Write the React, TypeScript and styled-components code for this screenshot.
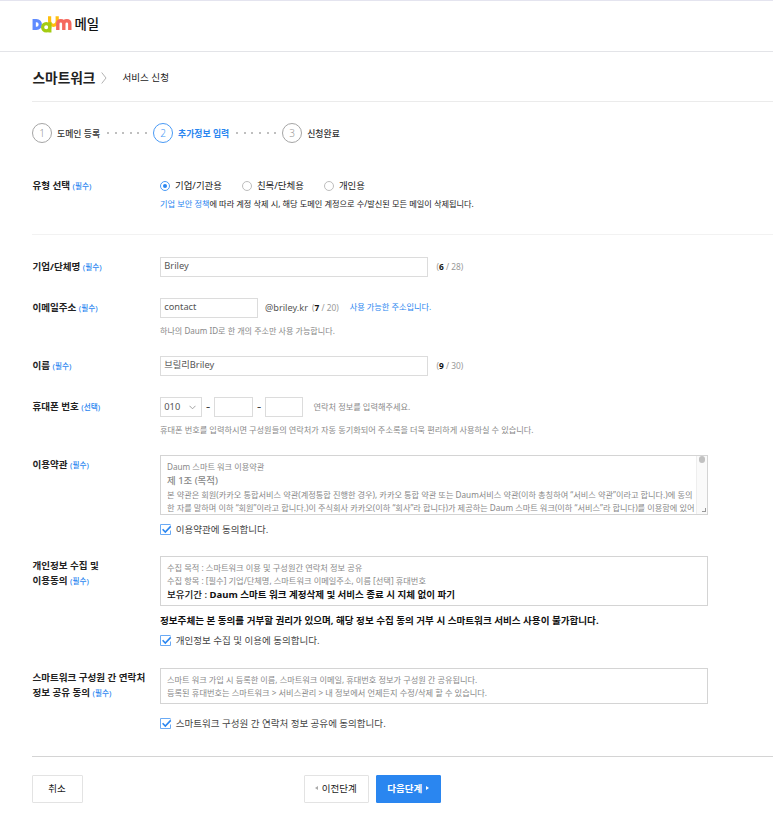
import React from 'react';
import styled, { createGlobalStyle } from 'styled-components';

const blue = '#2a86f0';

const GlobalStyle = createGlobalStyle`
  * { box-sizing: border-box; }
  body {
    margin: 0;
    background: #fff;
    color: #222;
    font-family: "Noto Sans", "Noto Sans CJK KR", sans-serif;
    font-size: 9.5px;
  }
`;

const Page = styled.div`
  height: 819px;
  overflow: hidden;
  white-space: nowrap;
  border-top: 1px solid #e4e4ef;
`;

const Header = styled.header`
  display: flex;
  align-items: center;
  height: 51px;
  padding: 0 0 4px 32px;
  border-bottom: 1px solid #e3e4e8;
`;

const ServiceName = styled.span`
  margin-left: 2.5px;
  font-size: 13.4px;
  line-height: 20px;
  font-weight: 500;
  color: #111;
`;

const Main = styled.main`
  padding-left: 32px;
`;

const TitleBar = styled.div`
  display: flex;
  align-items: center;
  height: 50px;
  padding: 2px 0 0 0.5px;
  border-bottom: 1px solid #ebebeb;
`;

const Title = styled.h1`
  margin: 0;
  font-size: 13.7px;
  line-height: 20px;
  font-weight: 700;
`;

const TitleArrow = styled.svg`
  margin: 0 15px 0 6px;
`;

const SubTitle = styled.span`
  padding-bottom: 1px;
  font-size: 9.57px;
`;

const Steps = styled.ol`
  display: flex;
  align-items: center;
  height: 62px;
  margin: 0;
  padding: 0;
  list-style: none;
`;

const Step = styled.li<{ $active?: boolean }>`
  display: flex;
  align-items: center;
  font-size: 8.87px;
  font-weight: ${(p) => (p.$active ? 700 : 500)};
  color: ${(p) => (p.$active ? blue : '#333')};
`;

const StepNumber = styled.span<{ $active?: boolean }>`
  display: flex;
  align-items: center;
  justify-content: center;
  width: 20px;
  height: 20px;
  margin-right: 5px;
  border: 1px solid ${(p) => (p.$active ? '#4a9af5' : '#a5a5a5')};
  border-radius: 50%;
  font-size: 10px;
  font-weight: 300;
  color: ${(p) => (p.$active ? '#4a9af5' : '#999')};
`;

const StepDots = styled.li`
  display: flex;
  gap: 5.6px;
  margin: 0 6px 0 7px;
`;

const Dot = styled.i`
  width: 2px;
  height: 1.5px;
  border-radius: 1px;
  background: #aaa;
`;

const Row = styled.section<{ $height: number }>`
  display: grid;
  grid-template-columns: 128px 1fr;
  align-items: start;
  height: ${(p) => p.$height}px;
`;

const TypeRow = styled(Row)`
  padding-top: 12px;
  border-bottom: 1px solid #f2f2f2;
  margin-bottom: 22px;
`;

const Label = styled.div`
  padding: 2px 0 0 0.5px;
  font-size: 9.54px;
  line-height: 15px;
  font-weight: 700;
`;

const Mark = styled.span`
  font-size: 7.65px;
  font-weight: 500;
  color: ${blue};
`;

const Line = styled.div`
  display: flex;
  align-items: center;
  height: 20px;
`;

const RadioLabel = styled.label<{ $gap: number }>`
  display: flex;
  align-items: center;
  margin-right: ${(p) => p.$gap}px;
  font-size: 9.45px;
`;

const RadioText = styled.span`
  padding-bottom: 2px;
`;

const Radio = styled.span<{ $checked?: boolean }>`
  display: flex;
  align-items: center;
  justify-content: center;
  width: 10px;
  height: 10px;
  margin-right: 5px;
  border: 1px solid ${(p) => (p.$checked ? '#4a9af5' : '#bdbdbd')};
  border-radius: 50%;
  &::after {
    content: "";
    width: 4px;
    height: 4px;
    border-radius: 50%;
    background: ${(p) => (p.$checked ? blue : 'transparent')};
  }
`;

const Policy = styled.p`
  margin: 2px 0 0;
  font-size: 8.2px;
  line-height: 12px;
`;

const PolicyLink = styled.a`
  color: ${blue};
`;

const Field = styled.div<{ $width: number }>`
  width: ${(p) => p.$width}px;
  height: 20px;
  padding: 0 3.3px;
  border: 1px solid #dcdcdc;
  font-size: 9.25px;
  line-height: 16px;
  color: #555;
`;

const Select = styled(Field)`
  display: flex;
  align-items: center;
  justify-content: space-between;
  padding-right: 5px;
`;

const Dash = styled.span`
  width: 12px;
  padding-bottom: 2px;
  text-align: center;
  font-size: 13px;
  line-height: 16px;
  color: #444;
`;

const Domain = styled.span`
  margin-left: 7px;
  padding-bottom: 1px;
  font-size: 9.2px;
  color: #555;
`;

const Count = styled.span<{ $gap: number }>`
  margin-left: ${(p) => p.$gap}px;
  padding-bottom: 1px;
  font-size: 8.35px;
  color: #999;
`;

const CountNow = styled.b`
  color: #111;
`;

const Available = styled.span`
  margin-left: 11px;
  padding-bottom: 2px;
  font-size: 8.16px;
  line-height: 12px;
  color: ${blue};
`;

const Aside = styled.span`
  margin-left: 10.5px;
  padding-bottom: 2px;
  font-size: 8.18px;
  color: #888;
`;

const Hint = styled.p<{ $size: number }>`
  margin: 7px 0 0;
  font-size: ${(p) => p.$size}px;
  line-height: 12px;
  color: #888;
`;

const TermsBox = styled.div<{ $height: number }>`
  display: flex;
  justify-content: space-between;
  width: 548px;
  height: ${(p) => p.$height}px;
  padding-left: 6px;
  border: 1px solid #d4d4d4;
  font-size: 8.19px;
  line-height: 13px;
  color: #888;
  overflow: hidden;
`;

const TermsText = styled.div`
  padding-top: 4px;
`;

const Article = styled.div`
  font-size: 9.45px;
  line-height: 15px;
  font-weight: 500;
`;

const Retention = styled.div`
  font-size: 9.52px;
  line-height: 15px;
  font-weight: 500;
  color: #111;
`;

const Purpose = styled.div`
  font-size: 8.22px;
`;

const Scrollbar = styled.div`
  display: flex;
  flex-direction: column;
  align-items: center;
  justify-content: space-between;
  width: 11px;
  padding: 0 0 2px;
  background: #fafafa;
  border-left: 1px solid #eee;
`;

const Thumb = styled.div`
  width: 6px;
  height: 7px;
  border-radius: 3px;
  background: #c1c1c1;
`;

const Grip = styled.div`
  width: 4px;
  height: 4px;
  margin-left: 3px;
  border: solid #999;
  border-width: 0 1px 1px 0;
`;

const Notice = styled.p`
  margin: 8px 0 1px;
  font-size: 9.57px;
  line-height: 14px;
  font-weight: 700;
  color: #111;
`;

const Agree = styled.label<{ $top: number }>`
  display: flex;
  align-items: center;
  gap: 3.7px;
  height: 14px;
  margin-top: ${(p) => p.$top}px;
  font-size: 9.52px;
  color: #444;
`;

const AgreeText = styled.span`
  padding-bottom: 2px;
`;

const Footer = styled.footer`
  display: flex;
  height: 64px;
  padding-top: 18px;
  border-top: 1px solid #d4d4d4;
`;

const Button = styled.button<{ $width: number; $primary?: boolean }>`
  display: flex;
  align-items: center;
  justify-content: center;
  gap: 3.5px;
  width: ${(p) => p.$width}px;
  height: 28px;
  padding: 0 1px 3px 0;
  border: 1px solid ${(p) => (p.$primary ? blue : '#e3e3e3')};
  border-radius: 1px;
  background: ${(p) => (p.$primary ? blue : '#fff')};
  color: ${(p) => (p.$primary ? '#fff' : '#222')};
  font-family: inherit;
  font-size: 9.5px;
  font-weight: ${(p) => (p.$primary ? 700 : 400)};
`;

const StepButtons = styled.div`
  display: flex;
  gap: 7px;
  margin-left: 221px;
`;

const Triangle = styled.svg`
  margin-top: 1px;
`;

function DaumLogo() {
  return (
    <svg width="40" height="20" viewBox="32 14 40 20" fill="none">
      <path d="M34.2 20.7h2.2c5.2 0 5.2 7.7 0 7.7h-2.2z" stroke="#5f8bff" strokeWidth="3.3" />
      <path d="M49.6 16.3v5c0 5.4 7.6 5.4 7.6 0v-5" stroke="#ffbf0f" strokeWidth="3.2" />
      <circle cx="46.2" cy="27.3" r="3.6" stroke="#a4cc12" strokeWidth="3.2" />
      <path d="M49.9 22.2v10.3" stroke="#a4cc12" strokeWidth="3.1" />
      <path d="M57.8 30v-6.2c0-4.1 6-4.1 6 0V30M63.8 30v-6.2c0-4.1 6-4.1 6 0V30" stroke="#f5695f" strokeWidth="3.4" />
    </svg>
  );
}

function Check() {
  return (
    <svg width="12" height="12" viewBox="0 0 12 12" fill="none">
      <path d="M10.5 6.5v4H.5v-10h10" stroke="#6aaaf5" />
      <path d="M10.5 1v2" stroke="#6aaaf5" strokeOpacity=".5" />
      <path d="M2.6 5.3l2.7 2.7 5.4-5.6" stroke={blue} strokeWidth="1.6" />
    </svg>
  );
}

const Dots = () => (
  <StepDots>
    {[0, 1, 2, 3, 4, 5].map((n) => <Dot key={n} />)}
  </StepDots>
);

const Required = () => <Mark>(필수)</Mark>;

export default function App() {
  return (
    <Page>
      <GlobalStyle />
      <Header>
        <DaumLogo />
        <ServiceName>메일</ServiceName>
      </Header>
      <Main>
        <TitleBar>
          <Title>스마트워크</Title>
          <TitleArrow width="6" height="12" viewBox="0 0 6 12" fill="none">
            <path d="M.7.5L5 6 .7 11.5" stroke="#aaa" strokeWidth=".9" />
          </TitleArrow>
          <SubTitle>서비스 신청</SubTitle>
        </TitleBar>
        <Steps>
          <Step><StepNumber>1</StepNumber>도메인 등록</Step>
          <Dots />
          <Step $active><StepNumber $active>2</StepNumber>추가정보 입력</Step>
          <Dots />
          <Step><StepNumber>3</StepNumber>신청완료</Step>
        </Steps>

        <TypeRow $height={71}>
          <Label>유형 선택 <Required /></Label>
          <div>
            <Line>
              <RadioLabel $gap={20}><Radio $checked /><RadioText>기업/기관용</RadioText></RadioLabel>
              <RadioLabel $gap={20}><Radio /><RadioText>친목/단체용</RadioText></RadioLabel>
              <RadioLabel $gap={0}><Radio /><RadioText>개인용</RadioText></RadioLabel>
            </Line>
            <Policy><PolicyLink>기업 보안 정책</PolicyLink>에 따라 계정 삭제 시, 해당 도메인 계정으로 수/발신된 모든 메일이 삭제됩니다.</Policy>
          </div>
        </TypeRow>

        <Row $height={41}>
          <Label>기업/단체명 <Required /></Label>
          <Line>
            <Field $width={268}>Briley</Field>
            <Count $gap={8.5}>(<CountNow>6</CountNow> / 28)</Count>
          </Line>
        </Row>
        <Row $height={58}>
          <Label>이메일주소 <Required /></Label>
          <div>
            <Line>
              <Field $width={98}>contact</Field>
              <Domain>@briley.kr</Domain>
              <Count $gap={4}>(<CountNow>7</CountNow> / 20)</Count>
              <Available>사용 가능한 주소입니다.</Available>
            </Line>
            <Hint $size={8.08}>하나의 Daum ID로 한 개의 주소만 사용 가능합니다.</Hint>
          </div>
        </Row>
        <Row $height={41}>
          <Label>이름 <Required /></Label>
          <Line>
            <Field $width={268}>브릴리Briley</Field>
            <Count $gap={8.5}>(<CountNow>9</CountNow> / 30)</Count>
          </Line>
        </Row>
        <Row $height={58}>
          <Label>휴대폰 번호 <Mark>(선택)</Mark></Label>
          <div>
            <Line>
              <Select $width={42}>
                010
                <svg width="7" height="5" viewBox="0 0 7 5" fill="none">
                  <path d="M.5.8l3 3 3-3" stroke="#999" strokeWidth=".9" />
                </svg>
              </Select>
              <Dash>-</Dash>
              <Field $width={39} />
              <Dash>-</Dash>
              <Field $width={38} />
              <Aside>연락처 정보를 입력해주세요.</Aside>
            </Line>
            <Hint $size={8.18}>휴대폰 번호를 입력하시면 구성원들의 연락처가 자동 동기화되어 주소록을 더욱 편리하게 사용하실 수 있습니다.</Hint>
          </div>
        </Row>
        <Row $height={101}>
          <Label>이용약관 <Required /></Label>
          <div>
            <TermsBox $height={60}>
              <TermsText>
                <div>Daum 스마트 워크 이용약관</div>
                <Article>제 1조 (목적)</Article>
                <div>본 약관은 회원(카카오 통합서비스 약관(계정통합 진행한 경우), 카카오 통합 약관 또는 Daum서비스 약관(이하 총칭하여 “서비스 약관”이라고 합니다.)에 동의</div>
                <div>한 자를 말하며 이하 “회원”이라고 합니다.)이 주식회사 카카오(이하 “회사”라 합니다)가 제공하는 Daum 스마트 워크(이하 “서비스”라 합니다)를 이용함에 있어</div>
              </TermsText>
              <Scrollbar><Thumb /><Grip /></Scrollbar>
            </TermsBox>
            <Agree $top={8}><Check /><AgreeText>이용약관에 동의합니다.</AgreeText></Agree>
          </div>
        </Row>
        <Row $height={112}>
          <Label>개인정보 수집 및<br />이용동의 <Required /></Label>
          <div>
            <TermsBox $height={50}>
              <TermsText>
                <Purpose>수집 목적 : 스마트워크 이용 및 구성원간 연락처 정보 공유</Purpose>
                <Purpose>수집 항목 : [필수] 기업/단체명, 스마트워크 이메일주소, 이름 [선택] 휴대번호</Purpose>
                <Retention>보유기간 : <b>Daum 스마트 워크 계정삭제 및 서비스 종료 시 지체 없이 파기</b></Retention>
              </TermsText>
            </TermsBox>
            <Notice>정보주체는 본 동의를 거부할 권리가 있으며, 해당 정보 수집 동의 거부 시 스마트워크 서비스 사용이 불가합니다.</Notice>
            <Agree $top={6}><Check /><AgreeText>개인정보 수집 및 이용에 동의합니다.</AgreeText></Agree>
          </div>
        </Row>
        <Row $height={88}>
          <Label>스마트워크 구성원 간 연락처<br />정보 공유 동의 <Required /></Label>
          <div>
            <TermsBox $height={36}>
              <TermsText>
                <div>스마트 워크 가입 시 등록한 이름, 스마트워크 이메일, 휴대번호 정보가 구성원 간 공유됩니다.</div>
                <Purpose>등록된 휴대번호는 스마트워크 &gt; 서비스관리 &gt; 내 정보에서 언제든지 수정/삭제 할 수 있습니다.</Purpose>
              </TermsText>
            </TermsBox>
            <Agree $top={13}><Check /><AgreeText>스마트워크 구성원 간 연락처 정보 공유에 동의합니다.</AgreeText></Agree>
          </div>
        </Row>
        <Footer>
          <Button $width={51}>취소</Button>
          <StepButtons>
            <Button $width={65}>
              <Triangle width="3" height="4" viewBox="0 0 3 4"><path d="M3 0v4L0 2z" fill="#aaa" /></Triangle>
              이전단계
            </Button>
            <Button $width={65} $primary>
              다음단계
              <Triangle width="3" height="4" viewBox="0 0 3 4"><path d="M0 0v4l3-2z" fill="#fff" /></Triangle>
            </Button>
          </StepButtons>
        </Footer>
      </Main>
    </Page>
  );
}
